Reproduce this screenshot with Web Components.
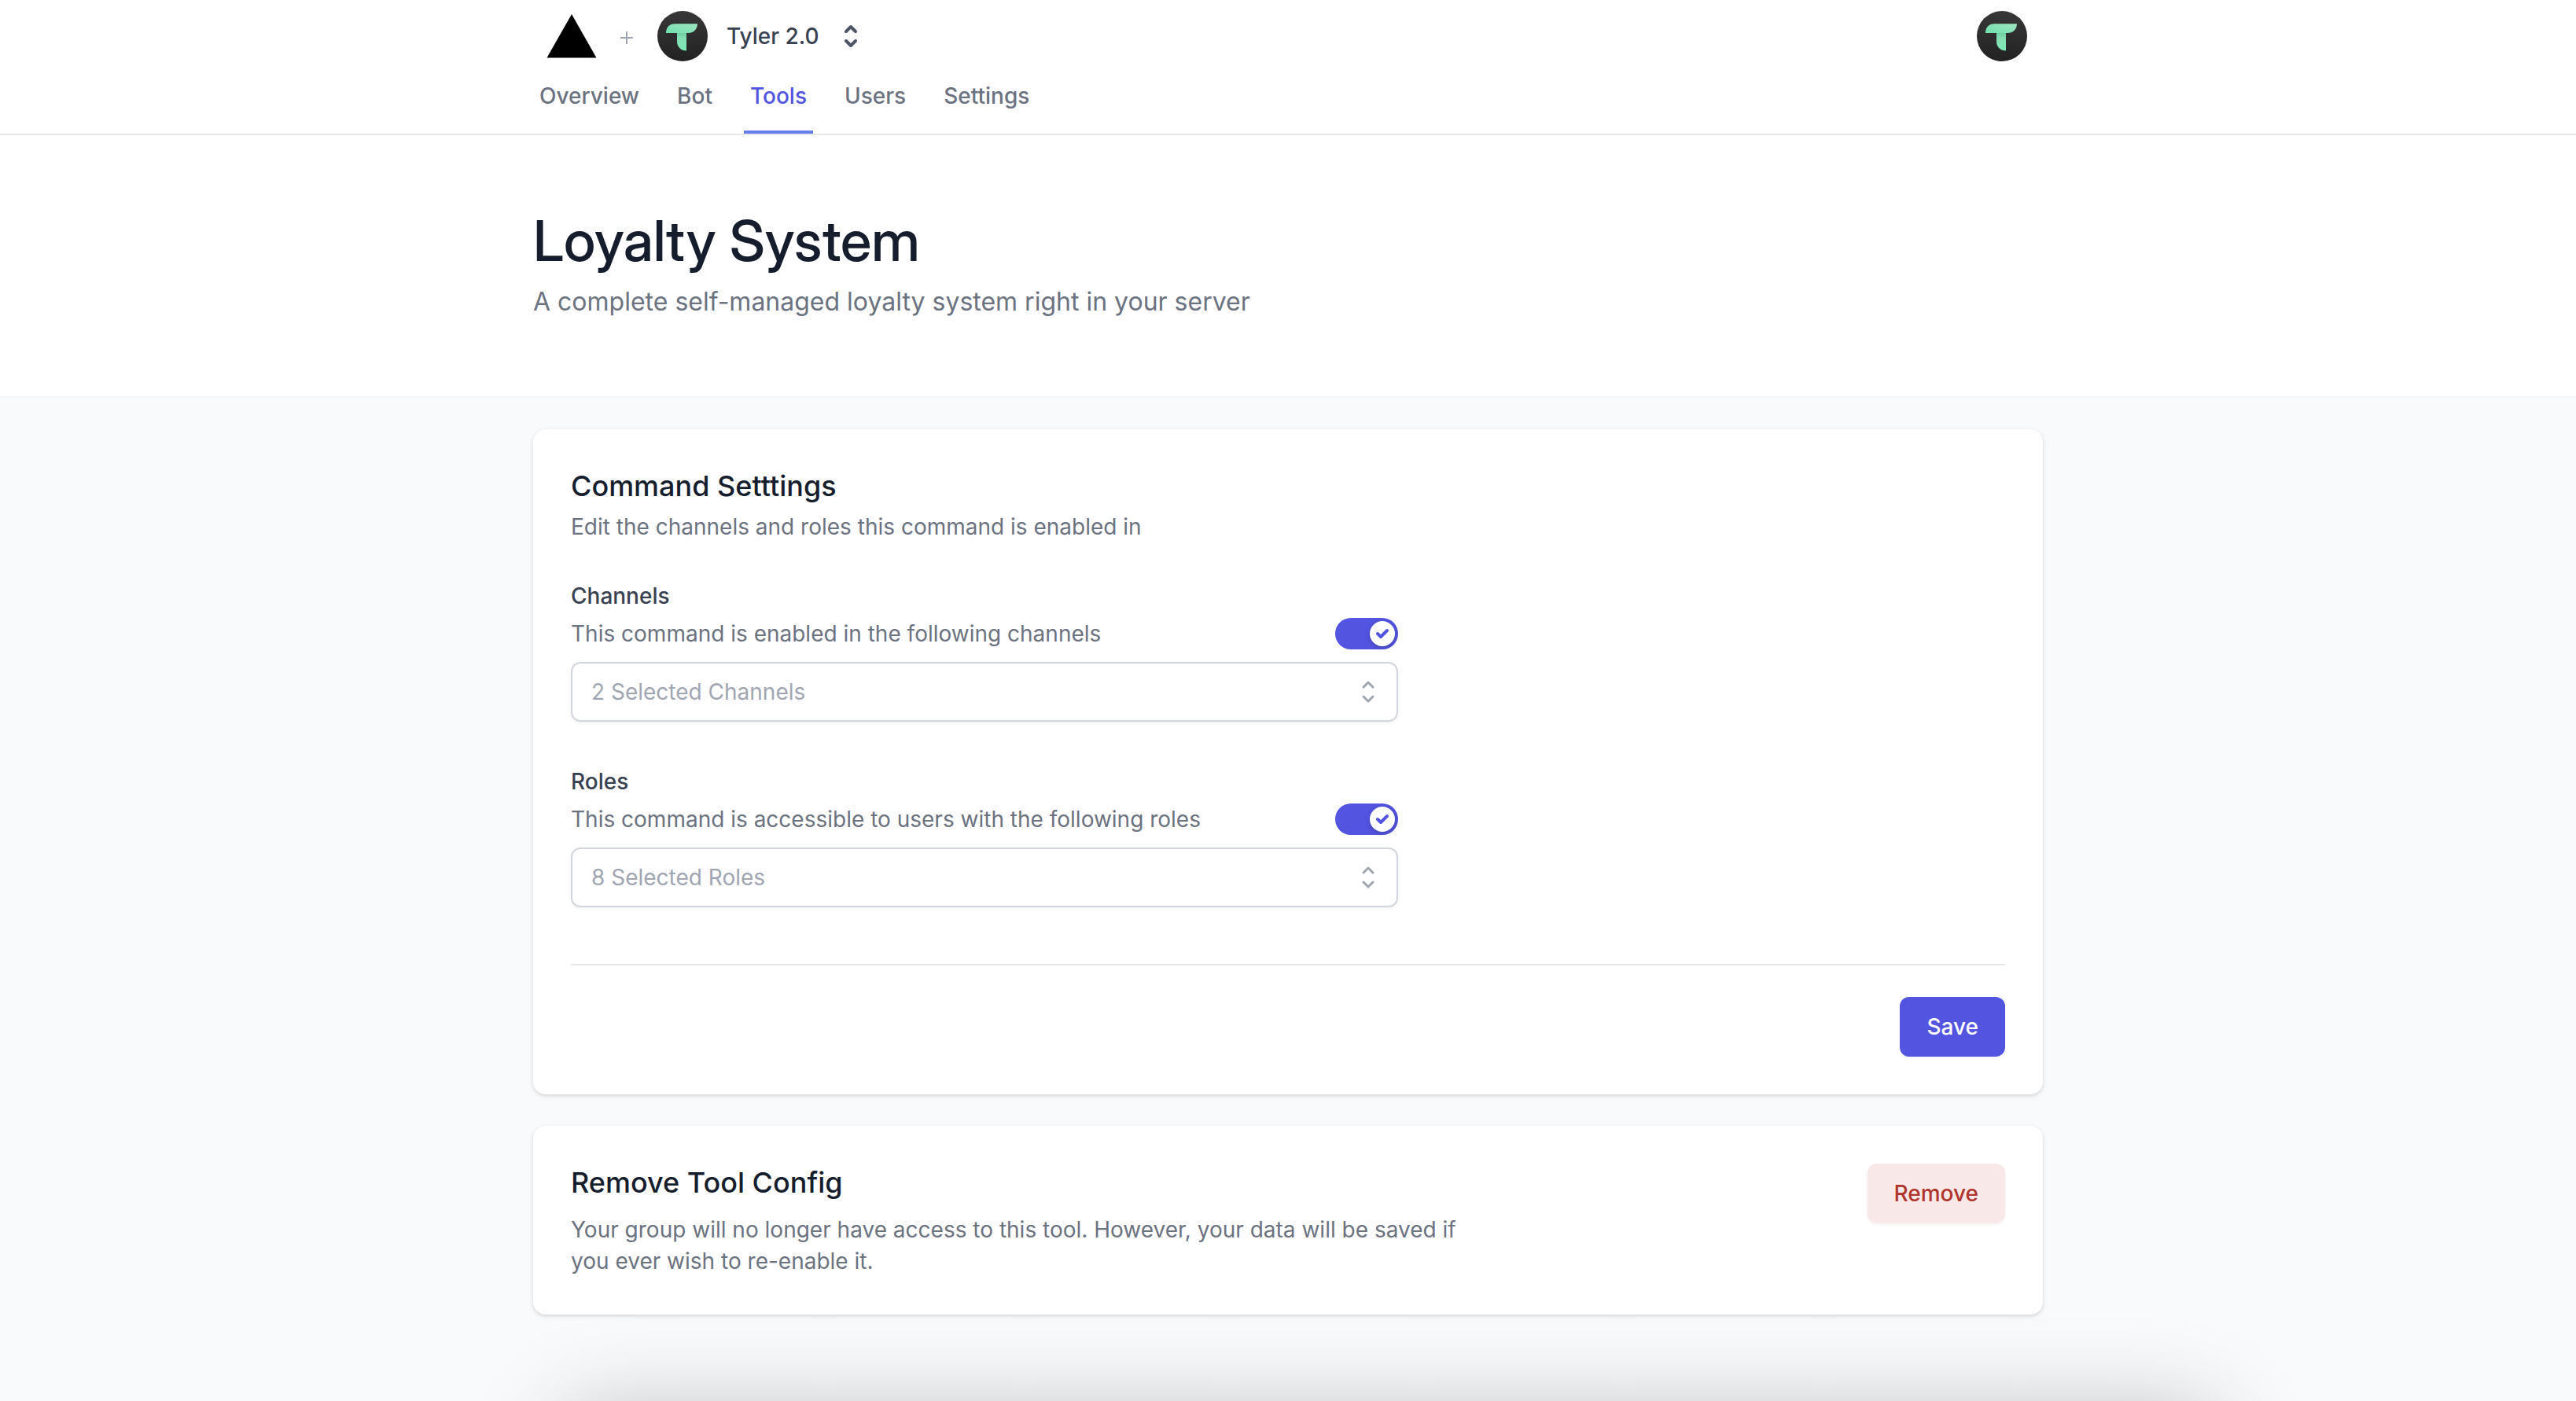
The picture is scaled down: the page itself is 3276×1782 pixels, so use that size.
<!DOCTYPE html>
<html lang="en">
<head>
<meta charset="utf-8">
<meta name="viewport" content="width=device-width, initial-scale=1">
<title>Loyalty System</title>
<style>
  :root {
    --indigo: #5354e0;
    --ink: #161e2e;
    --ink-2: #374151;
    --muted: #6b7280;
    --faint: #9fa6b2;
    --line: #e5e7eb;
    --field: #d2d6dc;
    --page: #f9fafb;
    --display: "Inter Display", "InterDisplay", "Inter Tight", Inter, "Liberation Sans", sans-serif;
  }
  html { height: 100%; }
  body {
    margin: 0;
    min-height: 100%;
    background: var(--page);
    color: var(--ink);
    font-family: Inter, "Liberation Sans", sans-serif;
    font-size: 28px;
    line-height: 40px;
    overflow: hidden;
  }
</style>
</head>
<body>
<loyalty-page></loyalty-page>
<script>
  const define = (name, html, setup) => {
    const template = document.createElement('template');
    template.innerHTML = html;
    customElements.define(name, class extends HTMLElement {
      constructor() {
        super();
        this.attachShadow({ mode: 'open' }).append(template.content.cloneNode(true));
      }
      connectedCallback() {
        if (setup) setup(this, this.shadowRoot);
      }
    });
  };

  define('page-container', `
    <style>
      :host { display: block; box-sizing: border-box; width: 100%; max-width: 2048px; margin: 0 auto; padding: 0 64px; }
    </style>
    <slot></slot>`);

  define('tyler-avatar', `
    <style>
      :host { display: block; width: 64px; height: 64px; flex: none; }
      svg { display: block; }
    </style>
    <svg width="64" height="64" viewBox="0 0 64 64" aria-hidden="true">
      <defs>
        <linearGradient id="disc" x1="0" y1="0" x2="0" y2="1"><stop offset="0" stop-color="#383838"/><stop offset="1" stop-color="#222"/></linearGradient>
        <linearGradient id="bar" x1="0" y1="1" x2="1" y2="0"><stop offset="0" stop-color="#6fe0ae"/><stop offset="1" stop-color="#a0e4c1"/></linearGradient>
        <linearGradient id="stem" x1="0" y1="0" x2="0" y2="1"><stop offset="0" stop-color="#6ccb9f"/><stop offset=".35" stop-color="#86dfb4"/><stop offset="1" stop-color="#7be8b6"/></linearGradient>
      </defs>
      <circle cx="32" cy="32" r="32" fill="url(#disc)"/>
      <path d="M25 27h12v23.500C30 50.500 25 46 25 38.500z" fill="url(#stem)"/>
      <path d="M22.500 16.300H51C51 23.500 46 28 39 28H11C11 20.500 15.500 16.300 22.500 16.300z" fill="url(#bar)"/>
    </svg>`);

  define('selector-icon', `
    <style>
      :host { display: block; flex: none; width: 40px; height: 40px; }
      svg { display: block; stroke-width: 1.5; }
      :host([bold]) svg { stroke-width: 2; }
    </style>
    <svg width="40" height="40" viewBox="0 0 20 20" fill="none" stroke="currentColor" stroke-linecap="round" stroke-linejoin="round" aria-hidden="true">
      <path d="M7 7l3-3 3 3m0 6l-3 3-3-3"/>
    </svg>`);

  define('nav-tab', `
    <style>
      :host { display: block; }
      a {
        display: block; padding: 0 8px 24px; border-bottom: 4px solid transparent;
        color: var(--muted); font-weight: 500; text-decoration: none;
      }
      :host([active]) a { color: var(--indigo); border-color: #667eea; }
    </style>
    <a href="#"><slot></slot></a>`, (host, root) => {
      if (host.hasAttribute('active')) root.querySelector('a').setAttribute('aria-current', 'page');
    });

  define('site-header', `
    <style>
      :host { display: block; background: #fff; border-bottom: 2px solid var(--line); }
      .top { display: flex; align-items: center; justify-content: space-between; padding: 14px 20px 24px 16px; }
      .brand { display: flex; align-items: center; }
      .home { display: block; }
      .home svg, .plus { display: block; }
      .plus { margin: 4px 30px 0 28px; }
      button {
        display: flex; align-items: center; margin: 0; padding: 0; border: 0; background: none;
        color: var(--ink-2); font: inherit; font-weight: 500;
      }
      button span { margin: 0 20px 0 24px; }
      selector-icon { color: #4b5563; }
      nav { display: flex; gap: 32px; }
    </style>
    <page-container>
      <div class="top">
        <div class="brand">
          <a class="home" href="#" aria-label="Home">
            <svg width="66" height="64" viewBox="0 0 66 64" aria-hidden="true"><path d="M33 4l31.500 55.500h-63z" fill="#000"/></svg>
          </a>
          <svg class="plus" width="18" height="18" viewBox="0 0 18 18" stroke="#9fa6b2" stroke-width="2" aria-hidden="true"><path d="M9 1v16M1 9h16"/></svg>
          <button type="button" aria-haspopup="listbox">
            <tyler-avatar></tyler-avatar><span>Tyler 2.0</span><selector-icon bold></selector-icon>
          </button>
        </div>
        <button type="button" aria-label="Account"><tyler-avatar></tyler-avatar></button>
      </div>
      <nav aria-label="Main">
        <nav-tab>Overview</nav-tab>
        <nav-tab>Bot</nav-tab>
        <nav-tab active>Tools</nav-tab>
        <nav-tab>Users</nav-tab>
        <nav-tab>Settings</nav-tab>
      </nav>
    </page-container>`);

  define('page-hero', `
    <style>
      :host { display: block; background: #fff; border-bottom: 2px solid #f4f5f7; padding: 94px 0 96px; }
      h1 { margin: 0; font-family: var(--display); font-size: 72px; line-height: 80px; font-weight: 500; }
      p { margin: 14px 0 0; color: var(--muted); font-size: 32px; line-height: 48px; }
    </style>
    <page-container>
      <h1><slot></slot></h1>
      <p><slot name="lead"></slot></p>
    </page-container>`);

  define('panel-card', `
    <style>
      :host {
        display: block; padding: 48px; border-radius: 16px; background: #fff;
        box-shadow: 0 2px 6px rgba(0, 0, 0, .1), 0 2px 4px rgba(0, 0, 0, .06);
      }
    </style>
    <slot></slot>`);

  define('ui-button', `
    <style>
      :host { display: block; flex: none; }
      button {
        display: block; margin: 0; padding: 18px 34px; border: 0; border-radius: 12px;
        background: var(--indigo); color: #fff; font: inherit; font-weight: 500;
        box-shadow: 0 2px 4px rgba(0, 0, 0, .05);
      }
      :host([danger]) button { background: #f9e8e8; color: #b0352d; }
    </style>
    <button type="button"><slot></slot></button>`);

  define('toggle-switch', `
    <style>
      :host { display: block; flex: none; width: 80px; height: 40px; }
      label { display: flex; justify-content: flex-end; position: relative; box-sizing: border-box; height: 40px; padding: 4px; border-radius: 20px; background: var(--indigo); }
      input { position: absolute; inset: 0; width: 100%; height: 100%; margin: 0; opacity: 0; }
      svg { display: block; border-radius: 50%; background: #fff; box-shadow: 0 2px 6px rgba(0, 0, 0, .2); }
    </style>
    <label>
      <input type="checkbox" role="switch" checked>
      <svg width="32" height="32" viewBox="0 0 32 32" fill="none" stroke="#5354e0" stroke-width="4" stroke-linecap="round" stroke-linejoin="round" aria-hidden="true"><path d="M10 16l4 4 8-8"/></svg>
    </label>`);

  define('access-field', `
    <style>
      :host { display: block; max-width: 1052px; }
      .name { display: block; color: var(--ink-2); font-weight: 500; }
      .row { display: flex; align-items: center; justify-content: space-between; margin: 8px 0 16px; color: var(--muted); }
      .box {
        display: flex; align-items: center; box-sizing: border-box; height: 76px; padding-right: 16px;
        border: 2px solid var(--field); border-radius: 12px; color: var(--faint);
        box-shadow: 0 2px 4px rgba(0, 0, 0, .05);
      }
      select {
        flex: 1; height: 72px; margin: 0; padding: 0 24px; border: 0; background: none;
        color: inherit; font: inherit; appearance: none; outline: 0;
      }
    </style>
    <label class="name" for="pick"></label>
    <div class="row"><span><slot></slot></span><toggle-switch></toggle-switch></div>
    <div class="box"><select id="pick"><option></option></select><selector-icon></selector-icon></div>`,
    (host, root) => {
      root.querySelector('.name').textContent = host.getAttribute('name');
      root.querySelector('option').textContent = host.getAttribute('value');
      root.querySelector('toggle-switch').shadowRoot.querySelector('input')
        .setAttribute('aria-label', 'Enable ' + host.getAttribute('name'));
    });

  define('bottom-sheet', `
    <style>
      :host {
        display: block; position: fixed; top: 100%; left: 22%; right: 14%; height: 200px;
        box-shadow: 0 20px 120px rgba(0, 0, 0, .27);
      }
    </style>`);

  define('loyalty-page', `
    <style>
      :host { display: block; }
      main { padding: 40px 0; }
      h2 { margin: 0; font-size: 36px; line-height: 48px; font-weight: 500; }
      p { margin: 0; color: var(--muted); }
      .lead { margin-top: 8px; }
      .fields { display: flex; flex-direction: column; gap: 56px; margin: 48px 0 72px; }
      .actions { display: flex; justify-content: flex-end; padding-top: 40px; border-top: 2px solid var(--line); }
      .remove { display: flex; align-items: flex-start; justify-content: space-between; }
      .about { max-width: 1152px; }
      .about p { margin-top: 16px; }
      .stack { display: flex; flex-direction: column; gap: 40px; }
    </style>
    <site-header></site-header>
    <page-hero>Loyalty System<span slot="lead">A complete self-managed loyalty system right in your server</span></page-hero>
    <main>
      <page-container>
        <div class="stack">
          <panel-card>
            <h2>Command Setttings</h2>
            <p class="lead">Edit the channels and roles this command is enabled in</p>
            <div class="fields">
              <access-field name="Channels" value="2 Selected Channels">This command is enabled in the following channels</access-field>
              <access-field name="Roles" value="8 Selected Roles">This command is accessible to users with the following roles</access-field>
            </div>
            <div class="actions"><ui-button>Save</ui-button></div>
          </panel-card>
          <panel-card>
            <div class="remove">
              <div class="about">
                <h2>Remove Tool Config</h2>
                <p>Your group will no longer have access to this tool. However, your data will be saved if you ever wish to re-enable it.</p>
              </div>
              <ui-button danger>Remove</ui-button>
            </div>
          </panel-card>
        </div>
      </page-container>
    </main>
    <bottom-sheet></bottom-sheet>`);
</script>
</body>
</html>
